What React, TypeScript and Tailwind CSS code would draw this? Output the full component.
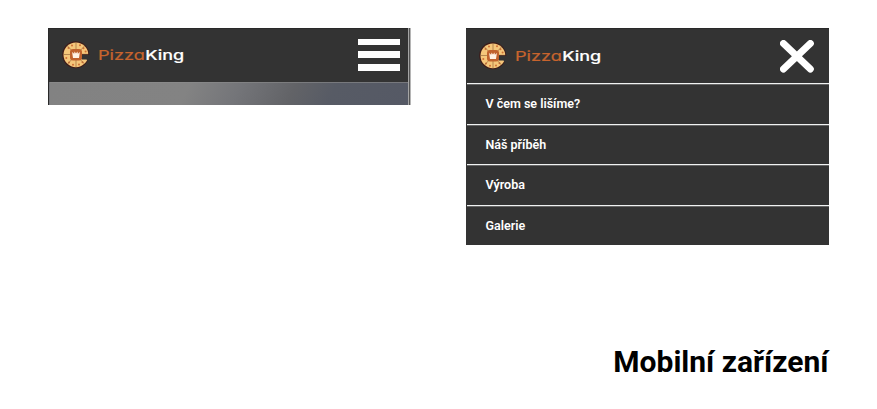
const toppings = [
  [10, 4.5], [6.5, 7], [18, 4.2], [21.5, 7.2], [4.3, 17], [7, 21.5], [11, 23.8], [17, 23.5], [20.5, 21.3], [23.6, 10.5],
];

function Logo() {
  return (
    <div className="flex items-center">
      <svg width="28" height="28" viewBox="0 0 28 28" aria-hidden="true">
        <circle cx="13.7" cy="13.7" r="13.5" fill="#3d1a17" />
        <circle cx="13.9" cy="13.8" r="12.4" fill="#f5c67a" />
        {toppings.map(([x, y]) => (
          <circle key={`${x}-${y}`} cx={x} cy={y} r="1" fill="#cf6f34" />
        ))}
        <path d="M14 1.5V26.5M1.5 13.5H14M5.5 5 14 14 5.5 23M22.5 5 14 14 22.5 23" stroke="#8a5c34" strokeWidth=".6" fill="none" />
        <path d="M14 13.6H28V22.5L24.5 18.6H20Z" fill="#333" />
        <path d="M18 13.4H27.2" stroke="#3d1a17" strokeWidth=".8" />
        <rect x="8" y="8" width="12" height="11.6" rx="3" fill="#c0622d" />
        <path d="M10.1 11l2 1.8.5-2.3 1.4 2 1.4-2 .5 2.3 2-1.8-.9 6h-6z" fill="#fff2e4" />
      </svg>
      <svg width="90" height="24" viewBox="0 0 90 24" className="ml-[7px]" fontFamily="Inter, sans-serif" fontSize="13.3" style={{ fontFeatureSettings: '"cv11"' }}>
        <text x="1" y="16.7" textLength="47" lengthAdjust="spacingAndGlyphs" fill="#c8642d" fontWeight="400" stroke="#c8642d" strokeWidth=".2">Pizza</text>
        <text x="48.2" y="16.7" textLength="39" lengthAdjust="spacingAndGlyphs" fill="#fff" fontWeight="500" stroke="#fff" strokeWidth=".15">King</text>
      </svg>
    </div>
  );
}

const items = [
  { label: "V čem se lišíme?", height: "h-[41px]" },
  { label: "Náš příběh", height: "h-[40px] pt-px" },
  { label: "Výroba", height: "h-[41px] pt-px" },
  { label: "Galerie", height: "h-[40px] pt-px" },
];

export default function App() {
  return (
    <main className="h-[409px] w-[877px] overflow-hidden bg-white px-12 pt-7 font-['Roboto',sans-serif]">
      <div className="flex h-[217px] items-start gap-[55px]">
        <section className="h-[77px] w-[363px] border-l border-[#292929] bg-[#333]">
          <div className="flex h-full border-r border-[#b5b5b5]">
            <div className="flex-1">
              <header className="flex h-[54px] items-center justify-between border-t border-[#292929] pb-px pl-[13px] pr-2">
                <Logo />
                <div className="flex w-[42px] flex-col gap-[6px]">
                  <i className="h-[6px] bg-white" />
                  <i className="h-[7px] bg-white" />
                  <i className="h-[7px] bg-white" />
                </div>
              </header>
              <div className="h-[23px] border-t border-l border-[#8d8d8d]/60 bg-[linear-gradient(115deg,#828282_0%,#838383_38%,#747579_52%,#626367_67%,#575b65_78%,#555965_100%)]" />
            </div>
            <div className="w-0.5 border-l border-[#a5a5a5] bg-[#555]" />
          </div>
        </section>
        <section className="h-[217px] w-[363px] bg-[#333]">
          <header className="flex h-[55px] items-center justify-between border-t border-[#292929] pl-[13px] pr-[15px]">
            <Logo />
            <svg width="34" height="33" viewBox="0 0 34 33" aria-label="Zavřít">
              <path d="M3.5 3.5 30.3 29M30.3 3.5 3.5 29" stroke="#fff" strokeWidth="7" strokeLinecap="round" />
            </svg>
          </header>
          <nav>
            {items.map((item) => (
              <a key={item.label} className={`${item.height} ml-px flex items-center border-t border-[#f0f2f2] pl-[18.5px] text-[12.5px] font-semibold text-white shadow-[inset_0_1px_0_#666]`}>
                {item.label}
              </a>
            ))}
          </nav>
        </section>
      </div>
      <h1 className="mt-[99px] pr-[0.5px] text-right text-[30px] leading-9 font-bold text-black">Mobilní zařízení</h1>
    </main>
  );
}
